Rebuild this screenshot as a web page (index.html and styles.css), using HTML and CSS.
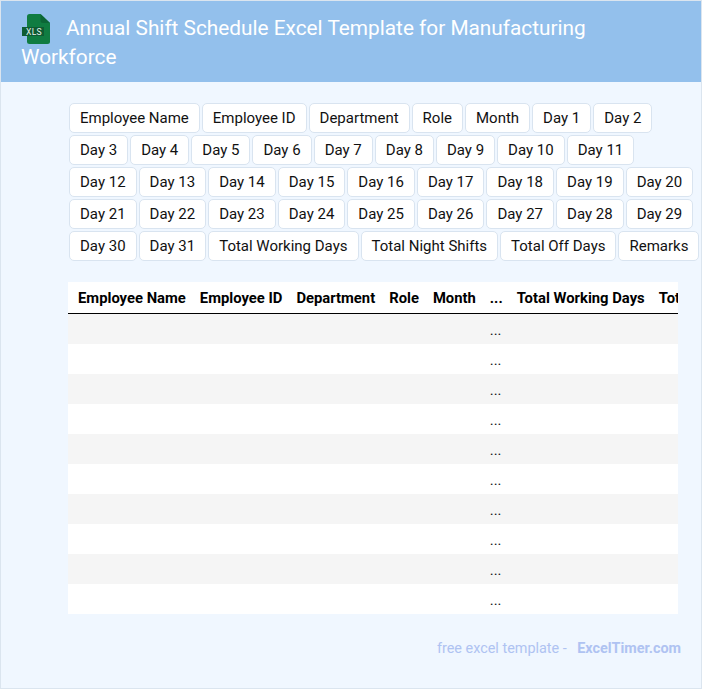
FILE: index.html
```html
<!DOCTYPE html>
<html lang="en">
<head>
<meta charset="utf-8">
<title>Annual Shift Schedule Excel Template for Manufacturing Workforce</title>
<link rel="stylesheet" href="styles.css">
</head>
<body>
<div class="page">
  <header class="header">
    <h1 class="title"><svg class="logo" width="28" height="30" viewBox="0 0 28 30" aria-hidden="true"><path d="M5 2.500Q5 0 7.500 0H18.500L28 9V27.500Q28 30 25.500 30H7.500Q5 30 5 27.500Z" fill="#107c41"/><path d="M18.500 0L28 9H21Q18.500 9 18.500 6.500Z" fill="#0c6636"/><rect x="0" y="13" width="22" height="9" fill="#0e5c33"/><text x="4" y="20.500" class="logo-text">XLS</text></svg><span class="title-text">Annual Shift Schedule Excel Template for Manufacturing Workforce</span></h1>
  </header>
  <main class="content">
    <div class="chips">
      <span class="chip">Employee Name</span><span class="chip">Employee ID</span><span class="chip">Department</span><span class="chip">Role</span><span class="chip">Month</span><span class="chip">Day 1</span><span class="chip">Day 2</span><span class="chip">Day 3</span><span class="chip">Day 4</span><span class="chip">Day 5</span><span class="chip">Day 6</span><span class="chip">Day 7</span><span class="chip">Day 8</span><span class="chip">Day 9</span><span class="chip">Day 10</span><span class="chip">Day 11</span><span class="chip">Day 12</span><span class="chip">Day 13</span><span class="chip">Day 14</span><span class="chip">Day 15</span><span class="chip">Day 16</span><span class="chip">Day 17</span><span class="chip">Day 18</span><span class="chip">Day 19</span><span class="chip">Day 20</span><span class="chip">Day 21</span><span class="chip">Day 22</span><span class="chip">Day 23</span><span class="chip">Day 24</span><span class="chip">Day 25</span><span class="chip">Day 26</span><span class="chip">Day 27</span><span class="chip">Day 28</span><span class="chip">Day 29</span><span class="chip">Day 30</span><span class="chip">Day 31</span><span class="chip">Total Working Days</span><span class="chip">Total Night Shifts</span><span class="chip">Total Off Days</span><span class="chip">Remarks</span>
    </div>
    <div class="table-wrap">
      <table class="table">
        <thead>
          <tr><th>Employee Name</th><th>Employee ID</th><th>Department</th><th>Role</th><th>Month</th><th>...</th><th>Total Working Days</th><th>Total Night Shifts</th><th>Total Off Days</th><th>Remarks</th></tr>
        </thead>
        <tbody>
          <tr><td></td><td></td><td></td><td></td><td></td><td>...</td><td></td><td></td><td></td><td></td></tr>
          <tr><td></td><td></td><td></td><td></td><td></td><td>...</td><td></td><td></td><td></td><td></td></tr>
          <tr><td></td><td></td><td></td><td></td><td></td><td>...</td><td></td><td></td><td></td><td></td></tr>
          <tr><td></td><td></td><td></td><td></td><td></td><td>...</td><td></td><td></td><td></td><td></td></tr>
          <tr><td></td><td></td><td></td><td></td><td></td><td>...</td><td></td><td></td><td></td><td></td></tr>
          <tr><td></td><td></td><td></td><td></td><td></td><td>...</td><td></td><td></td><td></td><td></td></tr>
          <tr><td></td><td></td><td></td><td></td><td></td><td>...</td><td></td><td></td><td></td><td></td></tr>
          <tr><td></td><td></td><td></td><td></td><td></td><td>...</td><td></td><td></td><td></td><td></td></tr>
          <tr><td></td><td></td><td></td><td></td><td></td><td>...</td><td></td><td></td><td></td><td></td></tr>
          <tr><td></td><td></td><td></td><td></td><td></td><td>...</td><td></td><td></td><td></td><td></td></tr>
        </tbody>
      </table>
    </div>
    <footer class="footer">free excel template - <strong class="brand">ExcelTimer.com</strong></footer>
  </main>
</div>
</body>
</html>
```
FILE: styles.css
```css
* { box-sizing: border-box; }
html, body { margin: 0; padding: 0; }
body { font-family: Roboto, "Liberation Sans", sans-serif; background: #f0f7ff; }
.page { width: 702px; height: 689px; border: 1px solid #dbe5ef; background: #f0f7ff; overflow: hidden; }
.header { height: 81px; background: #93c0ec; padding: 13px 20px; }
.title { margin: 0; font-size: 20.8px; line-height: 29px; font-weight: 400; color: #fff; }
.logo { vertical-align: -8px; margin: 0 16px -1px 1px; }
.logo-text { font-family: Roboto, sans-serif; font-size: 8.5px; font-weight: 400; fill: #e8f3ec; letter-spacing: .3px; }
.content { padding: 21px 0 0 67px; }
.chips { display: flex; flex-wrap: wrap; gap: 2px; width: 632px; margin-left: 1px; }
.chip { height: 30px; padding: 0 10px; border: 1px solid #d9e4f0; border-radius: 5px; background: #fff; font-size: 15px; line-height: 29px; color: #111; white-space: nowrap; }
.table-wrap { width: 610px; margin-top: 21px; overflow: hidden; background: #fff; }
.table { border-collapse: separate; border-spacing: 0; white-space: nowrap; font-size: 14.8px; color: #111; }
.table th { height: 32px; padding: 0 7px; font-weight: 700; text-align: left; border-bottom: 1px solid #000; color: #000; }
.table td { height: 30px; padding: 2px 7px 0; }
.table th:first-child, .table td:first-child { padding-left: 10px; }
.table tbody tr:nth-child(odd) { background: #f5f5f5; }
.footer { width: 613px; margin-top: 25px; text-align: right; font-size: 14.4px; line-height: 20px; color: #afc3f2; }
.brand { margin-left: 7px; font-weight: 700; }
```
